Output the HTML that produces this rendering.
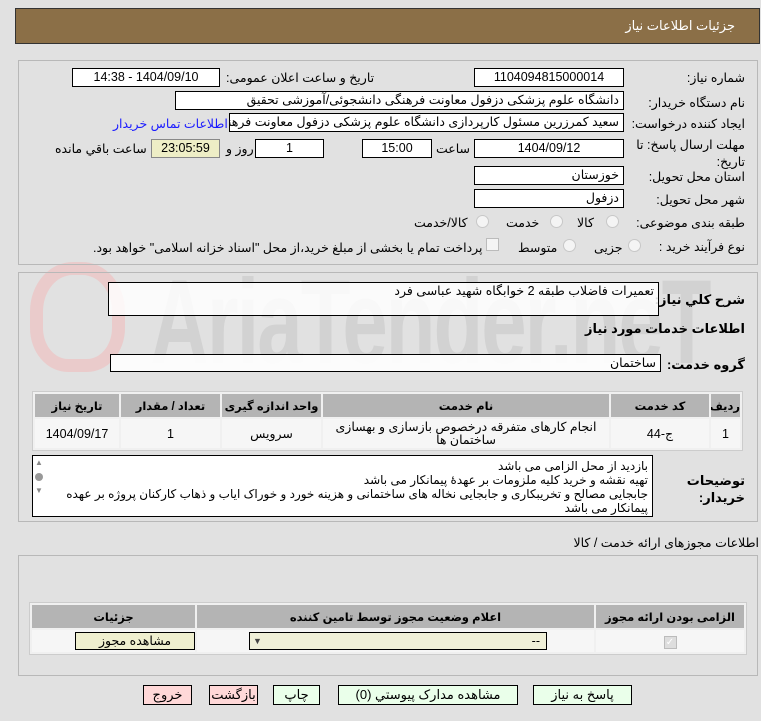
<!DOCTYPE html>
<html><head><meta charset="utf-8"><style>
*{box-sizing:border-box;margin:0;padding:0}
body{width:761px;height:721px;background:#e1e1e1;font-family:"Liberation Sans","DejaVu Sans",sans-serif;font-size:12.5px;color:#000;position:relative;overflow:hidden;direction:rtl}
.a{position:absolute;white-space:nowrap}
.box{position:absolute;background:#fff;border:1px solid #000;height:19px;line-height:17px;padding:0 4px;white-space:nowrap;overflow:hidden}
.c{text-align:center}
.panel{position:absolute;border:1px solid #b8b8b8;left:18px;width:740px}
.rad{position:absolute;width:13px;height:13px;border-radius:50%;border:1px solid #c8c8c8;background:#f4f4f4}
table{border-collapse:separate;border-spacing:2px;position:absolute;background:#f0f0f0;border:1px solid #ccc;table-layout:fixed}
th{background:#b4b4b4;font-weight:bold;height:23px;font-size:11.5px;white-space:nowrap;overflow:hidden}
td{background:#f6f6f6;text-align:center;font-size:12.5px}
.btn{position:absolute;height:20px;border:1px solid #000;text-align:center;line-height:18px;font-size:13px}
</style></head><body>
<div class="a" style="left:15px;top:8px;width:745px;height:36px;background:#8b6f47;border:1px solid #333"></div>
<div class="a" style="right:26px;top:18px;color:#fff;font-size:13px">جزئیات اطلاعات نیاز</div>

<div class="a" style="left:150px;top:262px;font-size:120px;font-weight:bold;color:#d2d2d2;direction:ltr;letter-spacing:-3px;transform:scaleX(0.68);transform-origin:left;line-height:120px">AriaTender.neT</div>
<div class="a" style="left:30px;top:262px;width:95px;height:110px;border:13px solid #ecc6c6;border-radius:45% 45% 40% 40%;opacity:.8"></div>

<div class="panel" style="top:60px;height:205px"></div>
<div class="a" style="right:16px;top:70px">شماره نیاز:</div>
<div class="box c" style="left:474px;top:68px;width:150px">1104094815000014</div>
<div class="a" style="left:226px;top:70px">تاریخ و ساعت اعلان عمومی:</div>
<div class="box c" style="left:72px;top:68px;width:148px">1404/09/10 - 14:38</div>

<div class="a" style="right:16px;top:95px">نام دستگاه خریدار:</div>
<div class="box" style="left:175px;top:91px;width:449px">دانشگاه علوم پزشکی دزفول معاونت فرهنگی دانشجوئی/آموزشی تحقیق</div>

<div class="a" style="right:16px;top:116px">ایجاد کننده درخواست:</div>
<div class="box" style="left:229px;top:113px;width:395px">سعید کمرزرین مسئول کارپردازی دانشگاه علوم پزشکی دزفول معاونت فرهنگی</div>
<div class="a" style="left:113px;top:116px;color:#1a1aff">اطلاعات تماس خریدار</div>

<div class="a" style="right:16px;top:137px;line-height:17px;white-space:normal;width:110px">مهلت ارسال پاسخ: تا تاریخ:</div>
<div class="box c" style="left:474px;top:139px;width:150px">1404/09/12</div>
<div class="a" style="left:436px;top:141px">ساعت</div>
<div class="box c" style="left:362px;top:139px;width:70px">15:00</div>
<div class="box c" style="left:255px;top:139px;width:69px">1</div>
<div class="a" style="left:226px;top:141px">روز و</div>
<div class="box c" style="left:151px;top:139px;width:69px;background:#eeeec6;border-color:#888">23:05:59</div>
<div class="a" style="left:55px;top:141px">ساعت باقي مانده</div>

<div class="a" style="right:16px;top:169px">استان محل تحویل:</div>
<div class="box" style="left:474px;top:166px;width:150px">خوزستان</div>
<div class="a" style="right:16px;top:192px">شهر محل تحویل:</div>
<div class="box" style="left:474px;top:189px;width:150px">دزفول</div>

<div class="a" style="right:16px;top:215px">طبقه بندی موضوعی:</div>
<div class="rad" style="left:606px;top:215px"></div><div class="a" style="left:577px;top:215px">کالا</div>
<div class="rad" style="left:550px;top:215px"></div><div class="a" style="left:506px;top:215px">خدمت</div>
<div class="rad" style="left:476px;top:215px"></div><div class="a" style="left:414px;top:215px">کالا/خدمت</div>

<div class="a" style="right:16px;top:239px">نوع فرآیند خرید :</div>
<div class="rad" style="left:628px;top:239px"></div><div class="a" style="left:594px;top:240px">جزیی</div>
<div class="rad" style="left:563px;top:239px"></div><div class="a" style="left:518px;top:240px">متوسط</div>
<div class="a" style="left:486px;top:238px;width:13px;height:13px;border:1px solid #bbb;background:#f4f4f4"></div>
<div class="a" style="left:93px;top:240px">پرداخت تمام یا بخشی از مبلغ خرید،از محل "اسناد خزانه اسلامی" خواهد بود.</div>

<div class="panel" style="top:272px;height:250px"></div>
<div class="a" style="right:16px;top:292px;font-weight:bold;font-size:13px">شرح کلي نياز:</div>
<div class="box" style="left:108px;top:282px;width:551px;height:34px;background:rgba(255,255,255,.85)">تعمیرات فاضلاب طبقه 2 خوابگاه شهید عباسی فرد</div>
<div class="a" style="right:16px;top:321px;font-weight:bold;font-size:13px">اطلاعات خدمات مورد نیاز</div>
<div class="a" style="right:16px;top:357px;font-weight:bold;font-size:13px">گروه خدمت:</div>
<div class="box" style="left:110px;top:354px;width:551px;height:18px;background:rgba(255,255,255,.9)">ساختمان</div>

<table style="left:32px;top:391px;width:711px">
<colgroup><col style="width:29px"><col style="width:98px"><col style="width:286px"><col style="width:99px"><col style="width:99px"><col></colgroup>
<tr><th>ردیف</th><th>کد خدمت</th><th>نام خدمت</th><th>واحد اندازه گیری</th><th>تعداد / مقدار</th><th>تاریخ نیاز</th></tr>
<tr style="height:29px"><td>1</td><td>ج-44</td><td style="line-height:13px">انجام کارهای متفرقه درخصوص بازسازی و بهسازی ساختمان ها</td><td>سرویس</td><td>1</td><td>1404/09/17</td></tr>
</table>

<div class="a" style="right:16px;top:472px;font-weight:bold;font-size:13px;line-height:17px;white-space:normal;width:60px">توضیحات خریدار:</div>
<div class="box" style="left:32px;top:455px;width:621px;height:62px;white-space:normal;line-height:14px;padding:3px 4px 0 22px;font-size:12px">بازدید از محل الزامی می باشد<br>تهیه نقشه و خرید کلیه ملزومات بر عهدهٔ پیمانکار می باشد<br>جابجایی مصالح و تخریبکاری و جابجایی نخاله های ساختمانی و هزینه خورد و خوراک ایاب و ذهاب کارکنان پروژه بر عهده پیمانکار می باشد</div>
<div class="a" style="left:35px;top:458px;color:#888;font-size:8px;direction:ltr">▲</div>
<div class="a" style="left:35px;top:473px;width:8px;height:8px;border-radius:50%;background:#999"></div>
<div class="a" style="left:35px;top:486px;color:#888;font-size:8px;direction:ltr">▼</div>

<div class="a" style="right:2px;top:535px">اطلاعات مجوزهای ارائه خدمت / کالا</div>
<div class="panel" style="top:555px;height:121px"></div>
<table style="left:29px;top:602px;width:718px">
<colgroup><col style="width:148px"><col><col style="width:163px"></colgroup>
<tr><th>الزامی بودن ارائه مجوز</th><th>اعلام وضعیت مجوز توسط تامین کننده</th><th>جزئیات</th></tr>
<tr style="height:22px"><td><span style="display:inline-block;width:13px;height:13px;background:#ddd;border:1px solid #bbb;color:#fff;font-size:10px;line-height:12px">✓</span></td>
<td><div style="margin-left:52px;width:298px;height:18px;border:1px solid #000;background:#f0f0d8;text-align:right;padding-right:6px;line-height:16px;position:relative;float:left">--<span style="position:absolute;left:3px;top:0;font-size:9px;color:#444">▼</span></div></td>
<td><div style="margin-left:21px;width:120px;height:18px;border:1px solid #000;background:#efefcf;line-height:16px">مشاهده مجوز</div></td></tr>
</table>

<div class="btn" style="left:533px;top:685px;width:99px;background:#eaffea">پاسخ به نیاز</div>
<div class="btn" style="left:338px;top:685px;width:180px;background:#eaffea">مشاهده مدارک پیوستي (0)</div>
<div class="btn" style="left:273px;top:685px;width:47px;background:#eaffea">چاپ</div>
<div class="btn" style="left:209px;top:685px;width:49px;background:#ffd8d8">بازگشت</div>
<div class="btn" style="left:143px;top:685px;width:49px;background:#ffd8d8">خروج</div>
</body></html>
